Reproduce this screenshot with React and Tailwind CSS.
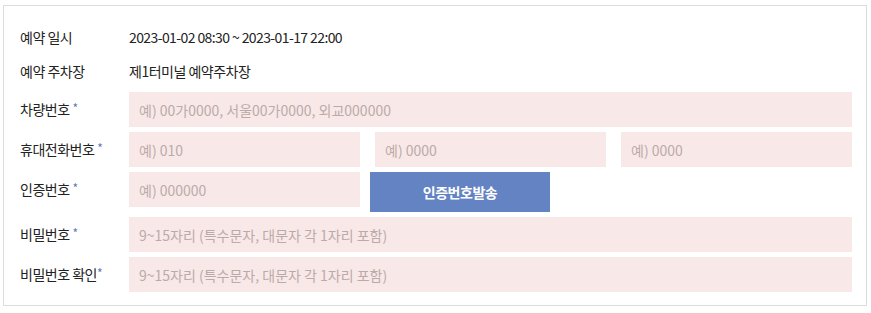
const FONT = { fontFamily: '"Noto Sans CJK KR", "Noto Sans", sans-serif' }

function Label({ children, required }) {
  return (
    <div className="w-[109px] shrink-0 text-[14px] text-[#222] tracking-[-0.5px]">
      {children}
      {required && <span className="ml-[3px] text-[12px] text-[#5f78bb] align-top">*</span>}
    </div>
  )
}

function Field({ placeholder, className = '' }) {
  return (
    <input
      type="text"
      placeholder={placeholder}
      className={`h-[35px] bg-[#f9e8e8] px-[10px] text-[14px] text-[#333] placeholder:text-[#bcaaaa] outline-none ${className}`}
      style={FONT}
    />
  )
}

export default function App() {
  return (
    <div className="w-[871px] h-[313px] bg-white pt-[5px] pl-[3px]" style={FONT}>
      <div className="w-[864px] border border-[#dddddd] pt-[14px] pb-[13px] pl-[16px] pr-[14px]">
        <div className="flex items-center h-[34px]">
          <Label>예약 일시</Label>
          <span className="text-[14px] text-[#222] tracking-[-0.6px]">2023-01-02 08:30 ~ 2023-01-17 22:00</span>
        </div>
        <div className="flex items-center h-[34px]">
          <Label>예약 주차장</Label>
          <span className="text-[14px] text-[#222] tracking-[-0.5px]">제1터미널 예약주차장</span>
        </div>
        <div className="flex flex-col gap-[5px] mt-[4px]">
          <div className="flex items-center">
            <Label required>차량번호</Label>
            <Field placeholder="예) 00가0000, 서울00가0000, 외교000000" className="flex-1" />
          </div>
          <div className="flex items-center">
            <Label required>휴대전화번호</Label>
            <div className="flex-1 grid grid-cols-3 gap-[15px]">
              <Field placeholder="예) 010" className="w-full" />
              <Field placeholder="예) 0000" className="w-full" />
              <Field placeholder="예) 0000" className="w-full" />
            </div>
          </div>
          <div className="flex items-start">
            <div className="h-[35px] flex items-center">
              <Label required>인증번호</Label>
            </div>
            <Field placeholder="예) 000000" className="w-[231px]" />
            <button className="ml-[10px] w-[180px] h-[40px] bg-[#6383c2] text-white text-[14px] font-bold tracking-[-0.5px]">
              인증번호발송
            </button>
          </div>
          <div className="flex items-center">
            <Label required>비밀번호</Label>
            <Field placeholder="9~15자리 (특수문자, 대문자 각 1자리 포함)" className="flex-1" />
          </div>
          <div className="flex items-center">
            <div className="w-[109px] shrink-0 text-[14px] text-[#222] tracking-[-0.5px]">
              비밀번호 확인<span className="text-[12px] text-[#5f78bb] align-top">*</span>
            </div>
            <Field placeholder="9~15자리 (특수문자, 대문자 각 1자리 포함)" className="flex-1" />
          </div>
        </div>
      </div>
    </div>
  )
}
